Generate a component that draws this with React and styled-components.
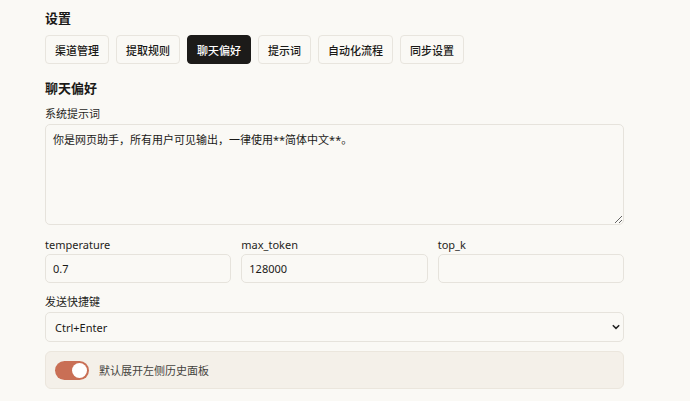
import React, { useState } from 'react';
import styled, { createGlobalStyle } from 'styled-components';

const GlobalStyle = createGlobalStyle`
    html, body {
        margin: 0;
        background: #faf9f5;
    }
    body {
        font-family: "Noto Sans", "Noto Sans CJK SC", sans-serif;
        color: #1a1917;
    }
`;

const Page = styled.div`
    width: 579px;
    padding: 8px 0 0 45px;
    display: flex;
    flex-direction: column;
`;

const Title = styled.h1`
    margin: 0;
    font-size: 13px;
    line-height: 20px;
    font-weight: 700;
`;

const Tabs = styled.div`
    display: flex;
    gap: 7px;
    margin-top: 7px;
`;

const Tab = styled.button`
    height: 29px;
    padding: 0 9px;
    font: inherit;
    font-size: 11px;
    font-weight: 500;
    border-radius: 4px;
    border: 1px solid ${p => (p.$active ? '#1c1b19' : '#e8e5de')};
    background: ${p => (p.$active ? '#1c1b19' : '#faf9f5')};
    color: ${p => (p.$active ? '#ffffff' : '#1a1917')};
    cursor: pointer;
`;

const Section = styled.h2`
    margin: 14px 0 0;
    font-size: 13px;
    line-height: 20px;
    font-weight: 700;
`;

const Field = styled.label`
    display: flex;
    flex-direction: column;
    gap: ${p => p.$gap || 2}px;
    margin-top: ${p => p.$top || 0}px;
    min-width: 0;
`;

const Label = styled.span`
    font-size: 11px;
    line-height: 16px;
    color: #1f1e1b;
`;

const TextArea = styled.textarea`
    box-sizing: border-box;
    height: 101px;
    padding: 6px 7px;
    font: inherit;
    font-size: 11px;
    line-height: 18px;
    color: #1a1917;
    background: #faf9f5;
    border: 1px solid #e6e3dc;
    border-radius: 5px;
    outline: none;
`;

const Row = styled.div`
    display: grid;
    grid-template-columns: repeat(3, 1fr);
    gap: 10px;
    margin-top: 12px;
`;

const Input = styled.input`
    box-sizing: border-box;
    width: 100%;
    height: 29px;
    padding: 0 7px;
    font: inherit;
    font-size: 11px;
    color: #1a1917;
    background: #faf9f5;
    border: 1px solid #e6e3dc;
    border-radius: 5px;
    outline: none;
`;

const SelectWrap = styled.div`
    position: relative;
`;

const Select = styled.select`
    box-sizing: border-box;
    width: 100%;
    height: 30px;
    padding: 0 9px;
    appearance: none;
    font: inherit;
    font-size: 11px;
    color: #1a1917;
    background: #faf9f5;
    border: 1px solid #e6e3dc;
    border-radius: 5px;
    outline: none;
`;

const Chevron = styled.svg`
    position: absolute;
    right: 3px;
    top: 12px;
    pointer-events: none;
`;

const Card = styled.div`
    box-sizing: border-box;
    height: 38px;
    margin-top: 9px;
    padding: 0 9px;
    display: flex;
    align-items: center;
    gap: 10px;
    background: #f4f0e9;
    border: 1px solid #ebe6dd;
    border-radius: 6px;
`;

const Switch = styled.button`
    position: relative;
    width: 34px;
    height: 19px;
    padding: 0;
    border: none;
    border-radius: 10px;
    background: ${p => (p.$on ? '#c96f55' : '#d6d1c8')};
    cursor: pointer;

    &::after {
        content: '';
        position: absolute;
        top: 2px;
        left: ${p => (p.$on ? '17px' : '2px')};
        width: 15px;
        height: 15px;
        border-radius: 50%;
        background: #fff;
    }
`;

const CardText = styled.span`
    font-size: 11px;
    color: #45433e;
`;

const tabs = ['渠道管理', '提取规则', '聊天偏好', '提示词', '自动化流程', '同步设置'];

const App = () => {
    const [active, setActive] = useState('聊天偏好');
    const [expand, setExpand] = useState(true);

    return (
        <Page>
            <GlobalStyle />
            <Title>设置</Title>
            <Tabs>
                {tabs.map(t => (
                    <Tab key={t} $active={t === active} onClick={() => setActive(t)}>
                        {t}
                    </Tab>
                ))}
            </Tabs>

            <Section>聊天偏好</Section>
            <Field $top={8}>
                <Label>系统提示词</Label>
                <TextArea defaultValue="你是网页助手，所有用户可见输出，一律使用**简体中文**。" />
            </Field>

            <Row>
                <Field $gap={1}>
                    <Label>temperature</Label>
                    <Input defaultValue="0.7" />
                </Field>
                <Field $gap={1}>
                    <Label>max_token</Label>
                    <Input defaultValue="128000" />
                </Field>
                <Field $gap={1}>
                    <Label>top_k</Label>
                    <Input defaultValue="" />
                </Field>
            </Row>

            <Field $top={11}>
                <Label>发送快捷键</Label>
                <SelectWrap>
                    <Select defaultValue="ctrl">
                        <option value="ctrl">Ctrl+Enter</option>
                        <option value="enter">Enter</option>
                    </Select>
                    <Chevron width="10" height="6" viewBox="0 0 10 6">
                        <path d="M1.8 1.2 L5 4.4 L8.2 1.2" fill="none" stroke="#222" strokeWidth="1.5" />
                    </Chevron>
                </SelectWrap>
            </Field>

            <Card>
                <Switch $on={expand} onClick={() => setExpand(v => !v)} />
                <CardText>默认展开左侧历史面板</CardText>
            </Card>
        </Page>
    );
};

export default App;
